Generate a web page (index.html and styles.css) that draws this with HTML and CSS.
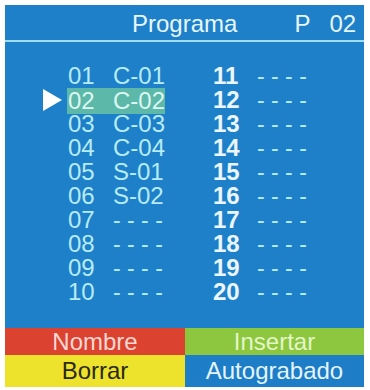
FILE: index.html
```html
<!DOCTYPE html>
<html>
<head>
<meta charset="utf-8">
<link rel="stylesheet" href="styles.css">
</head>
<body>
<div class="panel">
  <div class="header">
    <span class="title">Programa</span>
    <span class="prog-p">P</span>
    <span class="prog-n">02</span>
  </div>
  <div class="list">
    <div class="col col-left">
      <div class="row"><span class="marker"></span><span class="cell"><span class="num">01</span><span class="name">C-01</span></span></div>
      <div class="row"><span class="marker"><span class="tri"></span></span><span class="cell sel"><span class="num">02</span><span class="name">C-02</span></span></div>
      <div class="row"><span class="marker"></span><span class="cell"><span class="num">03</span><span class="name">C-03</span></span></div>
      <div class="row"><span class="marker"></span><span class="cell"><span class="num">04</span><span class="name">C-04</span></span></div>
      <div class="row"><span class="marker"></span><span class="cell"><span class="num">05</span><span class="name">S-01</span></span></div>
      <div class="row"><span class="marker"></span><span class="cell"><span class="num">06</span><span class="name">S-02</span></span></div>
      <div class="row"><span class="marker"></span><span class="cell"><span class="num">07</span><span class="name dash">- - - -</span></span></div>
      <div class="row"><span class="marker"></span><span class="cell"><span class="num">08</span><span class="name dash">- - - -</span></span></div>
      <div class="row"><span class="marker"></span><span class="cell"><span class="num">09</span><span class="name dash">- - - -</span></span></div>
      <div class="row"><span class="marker"></span><span class="cell"><span class="num">10</span><span class="name dash">- - - -</span></span></div>
    </div>
    <div class="col col-right">
      <div class="row"><span class="num">11</span><span class="name dash">- - - -</span></div>
      <div class="row"><span class="num">12</span><span class="name dash">- - - -</span></div>
      <div class="row"><span class="num">13</span><span class="name dash">- - - -</span></div>
      <div class="row"><span class="num">14</span><span class="name dash">- - - -</span></div>
      <div class="row"><span class="num">15</span><span class="name dash">- - - -</span></div>
      <div class="row"><span class="num">16</span><span class="name dash">- - - -</span></div>
      <div class="row"><span class="num">17</span><span class="name dash">- - - -</span></div>
      <div class="row"><span class="num">18</span><span class="name dash">- - - -</span></div>
      <div class="row"><span class="num">19</span><span class="name dash">- - - -</span></div>
      <div class="row"><span class="num">20</span><span class="name dash">- - - -</span></div>
    </div>
  </div>
  <div class="keys">
    <div class="key red">Nombre</div>
    <div class="key green">Insertar</div>
    <div class="key yellow">Borrar</div>
    <div class="key blue">Autograbado</div>
  </div>
</div>
</body>
</html>
```

FILE: styles.css
```css
html, body {
  margin: 0;
  padding: 0;
  background: #ffffff;
}
body {
  font-family: "Liberation Sans", Arial, sans-serif;
  padding: 5px 0 0 5px;
}
.panel {
  width: 359px;
  height: 382px;
  background: #1e80c8;
  display: flex;
  flex-direction: column;
}
.header {
  height: 35px;
  border-bottom: 2px solid #9fdcef;
  display: flex;
  align-items: flex-end;
  color: #e6f6fb;
  font-size: 24px;
  line-height: 33px;
}
.title {
  margin-left: 127px;
}
.prog-p {
  margin-left: 57px;
}
.prog-n {
  margin-left: 19px;
}
.list {
  flex: 1;
  display: flex;
  padding: 22px 0 0 38px;
  font-size: 24px;
  line-height: 24px;
}
.col-left {
  width: 170px;
}
.row {
  display: flex;
  height: 24px;
  align-items: center;
}
.marker {
  width: 24px;
  height: 24px;
  position: relative;
}
.tri {
  position: absolute;
  left: 0;
  top: 1px;
  width: 0;
  height: 0;
  border-top: 11.5px solid transparent;
  border-bottom: 11.5px solid transparent;
  border-left: 19px solid #ffffff;
}
.cell {
  display: flex;
  width: 98px;
  padding-left: 1px;
  box-sizing: border-box;
  height: 24px;
  align-items: center;
}
.cell.sel {
  background: #5cb8a8;
  height: 26px;
  margin-top: 1px;
}
.col-left .num {
  width: 45px;
  color: #b6ecf6;
}
.col-left .name {
  color: #b6ecf6;
}
.cell.sel .num,
.cell.sel .name {
  color: #dcf6f2;
}
.col-right .num {
  width: 44px;
  color: #eaf6fb;
  font-weight: bold;
}
.dash {
  color: #a8e6f4;
  font-size: 23px;
}
.col-right .dash {
  color: #b8ecf8;
}
.keys {
  display: grid;
  grid-template-columns: 180px 179px;
  grid-template-rows: 27px 32px;
  font-size: 24px;
}
.key {
  display: flex;
  align-items: center;
  justify-content: center;
}
.red {
  background: #dc4230;
  color: #f8d8d2;
}
.green {
  background: #8dc63f;
  color: #e4f6c8;
}
.yellow {
  background: #eee32c;
  color: #2c2a12;
}
.blue {
  background: #1d7dc6;
  color: #e4f4fc;
}
```
